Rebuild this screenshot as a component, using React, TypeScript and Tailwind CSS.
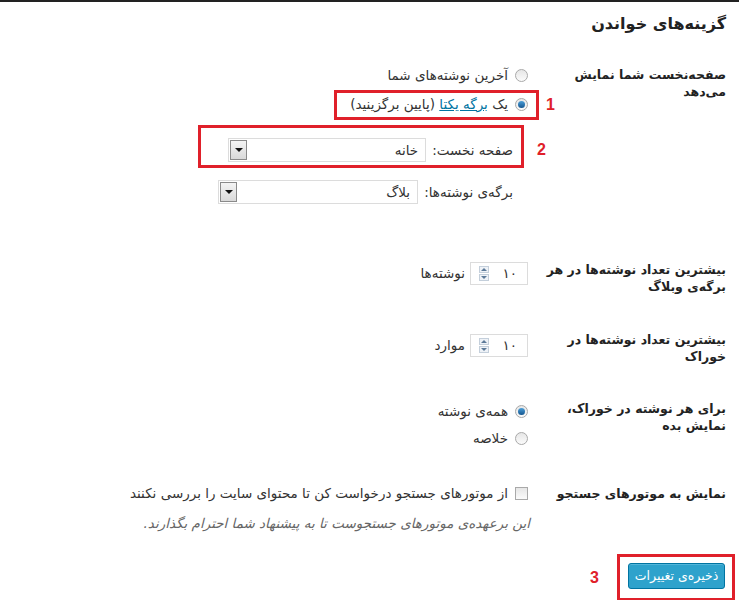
import { ReactNode } from "react"

function Radio({ checked }: { checked?: boolean }) {
    return (
        <span className="flex items-center justify-center w-[13px] h-[13px] rounded-full border border-[#a9a9a9] bg-gradient-to-b from-[#e6e6e6] to-[#fbfbfb] shrink-0">
            {checked && <span className="w-[7px] h-[7px] rounded-full bg-gradient-to-b from-[#4c9fd8] to-[#14568f]" />}
        </span>
    )
}

function Select({ value, width }: { value: string, width: string }) {
    return (
        <div className={`flex items-center justify-between h-[24px] border border-[#dcdcdc] bg-white ${width}`}>
            <span className="pr-[7px] text-[#333]">{value}</span>
            <span className="flex items-center justify-center w-[17px] h-[20px] ml-[1px] border border-[#8a8a8a] bg-gradient-to-b from-[#f4f4f4] to-[#d9d9d9]">
                <span className="w-0 h-0 border-x-[4px] border-x-transparent border-t-[4px] border-t-[#111]" />
            </span>
        </div>
    )
}

function NumberBox({ value }: { value: string }) {
    return (
        <div className="flex items-center justify-between w-[58px] h-[23px] border border-[#dcdcdc] bg-white">
            <span className="pr-[10px] text-[#333]">{value}</span>
            <span className="flex flex-col gap-[1px] ml-[8px]">
                <span className="flex items-center justify-center w-[10px] h-[7px] border border-[#c4cfdb] bg-[#eef2f7]">
                    <span className="w-0 h-0 border-x-[3px] border-x-transparent border-b-[3px] border-b-[#5d7a99]" />
                </span>
                <span className="flex items-center justify-center w-[10px] h-[7px] border border-[#c4cfdb] bg-[#eef2f7]">
                    <span className="w-0 h-0 border-x-[3px] border-x-transparent border-t-[3px] border-t-[#5d7a99]" />
                </span>
            </span>
        </div>
    )
}

function Row({ label, children, className }: { label: ReactNode, children: ReactNode, className?: string }) {
    return (
        <div className={`flex ${className ?? ""}`}>
            <div className="w-[198px] shrink-0 font-bold text-[12.5px] leading-[17px] text-[#222] whitespace-nowrap">{label}</div>
            <div className="flex-1">{children}</div>
        </div>
    )
}

function Mark({ n, className }: { n: string, className: string }) {
    return (
        <span className={`absolute font-['Liberation_Sans',sans-serif] font-bold text-[16px] leading-none text-[#e0202a] ${className}`}>{n}</span>
    )
}

export default function App() {
    return (
        <div dir="rtl" className="w-[739px] h-[600px] bg-white font-['DejaVu_Sans',sans-serif] text-[13.5px] text-[#333] overflow-hidden">
            <div className="h-[2px] bg-[#222]" />
            <h2 className="mt-[10px] pr-[13px] text-[16px] leading-[24px] font-bold text-[#222]">گزینه‌های خواندن</h2>

            <div className="pr-[13px]">
                <Row className="mt-[30px]" label={<>صفحه‌نخست شما نمایش<br />می‌دهد</>}>
                    <label className="flex items-center gap-[7px] h-[20px] mt-[-1px]">
                        <Radio />
                        <span>آخرین نوشته‌های شما</span>
                    </label>
                    <div className="relative mt-[9px]">
                        <label className="flex items-center gap-[7px] h-[20px]">
                            <Radio checked />
                            <span>یک <a className="text-[#0074a2] underline">برگه یکتا</a> (پایین برگزینید)</span>
                        </label>
                        <span className="absolute top-[-4px] right-[-11px] w-[205px] h-[30px] border-[3px] border-[#e0202a]" />
                        <Mark n="1" className="top-[3px] right-[-27px]" />
                    </div>
                    <div className="relative mt-[24px] pr-[15px]">
                        <div className="flex items-center gap-[6px]">
                            <span>صفحه نخست:</span>
                            <Select value="خانه" width="w-[198px]" />
                        </div>
                        <span className="absolute top-[-13px] right-[4px] w-[326px] h-[43px] border-[3px] border-[#e0202a]" />
                        <Mark n="2" className="top-[4px] right-[-18px]" />
                    </div>
                    <div className="flex items-center gap-[6px] mt-[18px] pr-[15px]">
                        <span>برگه‌ی نوشته‌ها:</span>
                        <Select value="بلاگ" width="w-[200px]" />
                    </div>
                </Row>

                <Row className="mt-[57px]" label={<>بیشترین تعداد نوشته‌ها در هر<br />برگه‌ی وبلاگ</>}>
                    <div className="flex items-center gap-[5px] mt-[1px]">
                        <NumberBox value="۱۰" />
                        <span>نوشته‌ها</span>
                    </div>
                </Row>

                <Row className="mt-[36px]" label={<>بیشترین تعداد نوشته‌ها در<br />خوراک</>}>
                    <div className="flex items-center gap-[5px] mt-[3px]">
                        <NumberBox value="۱۰" />
                        <span>موارد</span>
                    </div>
                </Row>

                <Row className="mt-[35px]" label={<>برای هر نوشته در خوراک،<br />نمایش بده</>}>
                    <label className="flex items-center gap-[7px] h-[20px] mt-[1px]">
                        <Radio checked />
                        <span>همه‌ی نوشته</span>
                    </label>
                    <label className="flex items-center gap-[7px] h-[20px] mt-[7px]">
                        <Radio />
                        <span>خلاصه</span>
                    </label>
                </Row>

                <Row className="mt-[37px]" label={<>نمایش به موتورهای جستجو</>}>
                    <label className="flex items-center gap-[7px] h-[17px]">
                        <span className="w-[13px] h-[13px] border border-[#a9a9a9] bg-gradient-to-b from-[#e6e6e6] to-[#fbfbfb] shrink-0" />
                        <span>از موتورهای جستجو درخواست کن تا محتوای سایت را بررسی نکنند</span>
                    </label>
                    <p className="mt-[11px] mr-[-2px] italic text-[#666]">این برعهده‌ی موتورهای جستجوست تا به پیشنهاد شما احترام بگذارند.</p>
                </Row>

                <div className="relative mt-[30px] w-[97px] mr-[1px]">
                    <button className="w-[97px] h-[26px] rounded-[3px] border border-[#0074a2] bg-[#2ea2cc] text-white text-[12.5px] shadow-[inset_0_1px_0_rgba(120,200,230,0.5)]">ذخیره‌ی تغییرات</button>
                    <span className="absolute top-[-9px] right-[-10px] w-[118px] h-[47px] border-[3px] border-[#e0202a]" />
                    <Mark n="3" className="top-[7px] left-[-38px]" />
                </div>
            </div>
        </div>
    )
}
